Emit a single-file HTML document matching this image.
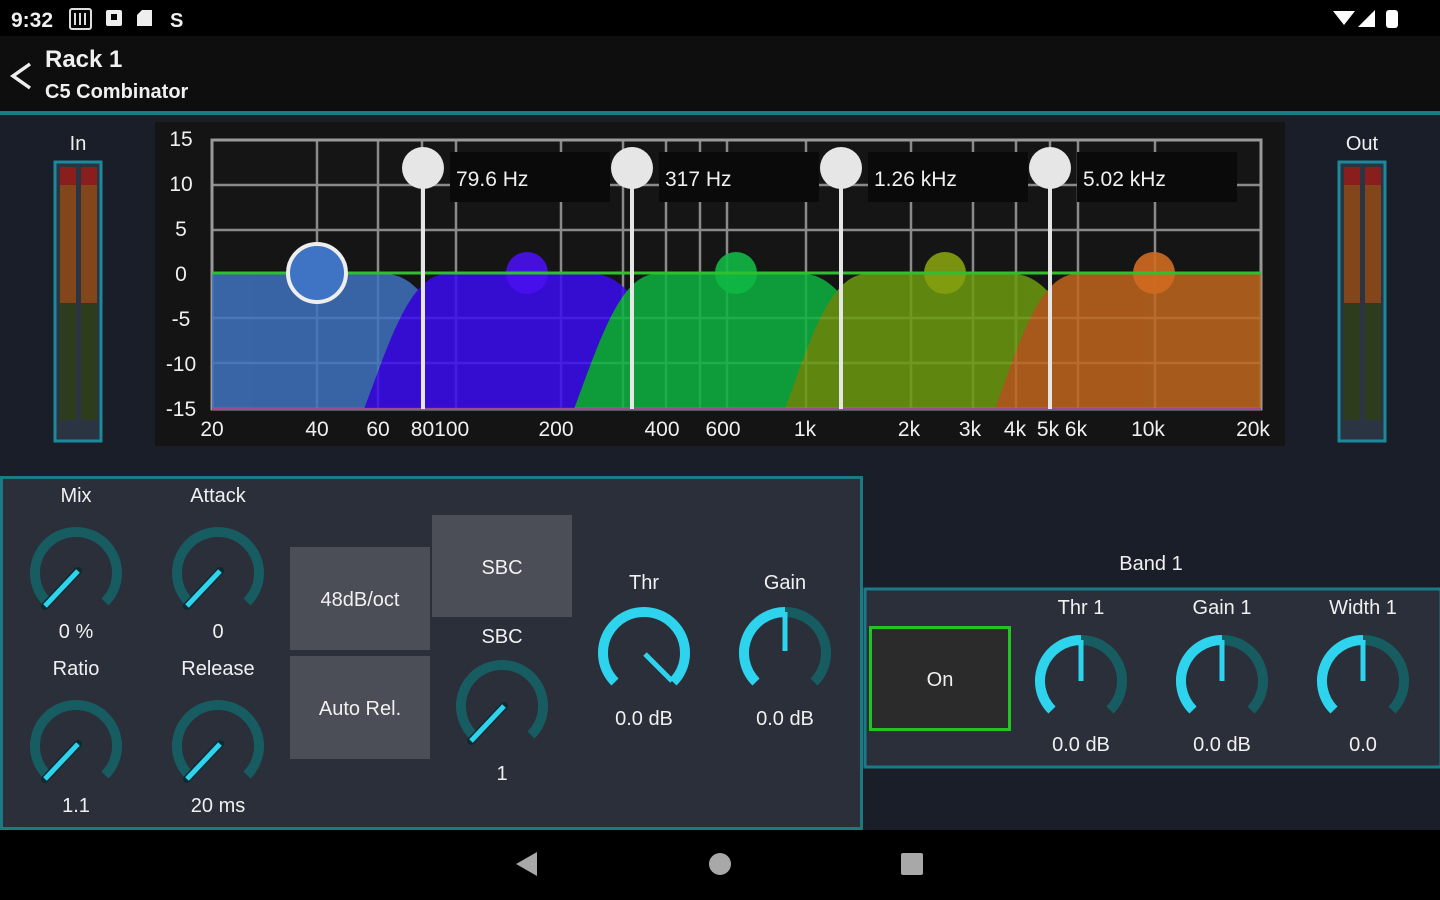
<!DOCTYPE html>
<html><head><meta charset="utf-8"><style>
html,body{margin:0;padding:0;background:#000;width:1440px;height:900px;overflow:hidden}
svg{display:block}
text{font-family:"Liberation Sans",sans-serif;fill:#f0f0f0}
</style></head><body>
<svg width="1440" height="900" viewBox="0 0 1440 900" xmlns="http://www.w3.org/2000/svg">
<defs>
<g id="meter">
<rect x="0" y="0" width="46" height="279" fill="#2a3442" stroke="#1c8a9a" stroke-width="3"/>
<rect x="5" y="5" width="16" height="18" fill="#8a1e1c"/><rect x="26" y="5" width="16" height="18" fill="#8a1e1c"/>
<rect x="5" y="23" width="16" height="118" fill="#83461a"/><rect x="26" y="23" width="16" height="118" fill="#83461a"/>
<rect x="5" y="141" width="16" height="117" fill="#2c3c1c"/><rect x="26" y="141" width="16" height="117" fill="#2c3c1c"/>
</g>
</defs>
<!-- status bar -->
<rect x="0" y="0" width="1440" height="36" fill="#000"/>
<text x="11" y="27" font-size="21" font-weight="bold">9:32</text>
<rect x="70" y="9" width="21" height="20" rx="2" fill="none" stroke="#ddd" stroke-width="2"/>
<path d="M75 13v12M80 13v12M85 13v12" stroke="#ddd" stroke-width="2"/>
<rect x="106" y="10" width="16" height="16" rx="2" fill="#eee"/><rect x="111" y="14" width="6" height="6" fill="#000"/>
<path d="M142 10h10v16h-15v-11z" fill="#eee"/>
<text x="170" y="27" font-size="20" font-weight="bold">S</text>
<path d="M1333 11h22l-11 14z" fill="#fff"/>
<path d="M1358 27l17-17v17z" fill="#fff"/>
<rect x="1386" y="10" width="12" height="18" rx="3" fill="#fff"/>
<!-- app bar -->
<rect x="0" y="36" width="1440" height="76" fill="#0e0e0e"/>
<path d="M30 64l-17 12 17 12" fill="none" stroke="#eee" stroke-width="3.5"/>
<text x="45" y="67" font-size="24" font-weight="bold">Rack 1</text>
<text x="45" y="98" font-size="20" font-weight="bold">C5 Combinator</text>
<rect x="0" y="111" width="1440" height="4" fill="#1c7a86"/>
<!-- main -->
<rect x="0" y="115" width="1440" height="715" fill="#1a1e28"/>
<text x="78" y="150" font-size="20" text-anchor="middle">In</text>
<g transform="translate(55,162)"><use href="#meter"/></g>
<text x="1362" y="150" font-size="20" text-anchor="middle">Out</text>
<g transform="translate(1339,162)"><use href="#meter"/></g>
<!-- graph -->
<rect x="155" y="122" width="1130" height="324" fill="#141414"/>
<rect x="212" y="140" width="1049" height="269" fill="#151515"/>
<g stroke="#8a8a8a" stroke-width="2.5">
<path d="M212 140h1049M212 185h1049M212 230h1049M212 318h1049M212 363h1049"/>
<path d="M317 140v269M378 140v269M422 140v269M456 140v269M561 140v269M623 140v269M666 140v269M700 140v269M727 140v269M806 140v269M911 140v269M973 140v269M1016 140v269M1050 140v269M1078 140v269M1155 140v269"/>
</g>
<rect x="212" y="140" width="1049" height="269" fill="none" stroke="#999" stroke-width="3"/>
<rect x="450" y="152" width="160" height="50" fill="#0a0a0a"/>
<rect x="659" y="152" width="160" height="50" fill="#0a0a0a"/>
<rect x="868" y="152" width="160" height="50" fill="#0a0a0a"/>
<rect x="1077" y="152" width="160" height="50" fill="#0a0a0a"/>
<g opacity="0.85">
<path d="M212 409V274H385C425 274 445 330 480 409Z" fill="#3f72c0"/>
<path d="M364 409C390 340 410 276 445 274H595C635 276 660 340 690 409Z" fill="#3a0cf2"/>
<path d="M574 409C600 340 620 276 655 274H805C845 276 870 340 900 409Z" fill="#0cb440"/>
<path d="M785 409C810 340 830 276 865 274H1015C1055 276 1080 340 1110 409Z" fill="#6c9c10"/>
<path d="M995 409C1020 340 1040 276 1075 274H1261V409Z" fill="#c0661c"/>
</g>
<circle cx="527" cy="273" r="21" fill="#4a10f0" opacity="0.9"/>
<circle cx="736" cy="273" r="21" fill="#10b844" opacity="0.9"/>
<circle cx="945" cy="273" r="21" fill="#84a010" opacity="0.9"/>
<circle cx="1154" cy="273" r="21" fill="#d06a20" opacity="0.9"/>
<path d="M212 273H1261" stroke="#2fc02f" stroke-width="3"/>
<path d="M212 409H1261" stroke="#a04a8a" stroke-width="2"/>
<circle cx="317" cy="273" r="29" fill="#3f74c4" stroke="#eee" stroke-width="4"/>
<g fill="#e6e6e6" stroke="#e6e6e6">
<path d="M423 168V409M632 168V409M841 168V409M1050 168V409" stroke-width="4"/>
<circle cx="423" cy="168" r="21" stroke="none"/><circle cx="632" cy="168" r="21" stroke="none"/>
<circle cx="841" cy="168" r="21" stroke="none"/><circle cx="1050" cy="168" r="21" stroke="none"/>
</g>
<g font-size="21">
<text x="456" y="186">79.6 Hz</text><text x="665" y="186">317 Hz</text>
<text x="874" y="186">1.26 kHz</text><text x="1083" y="186">5.02 kHz</text>
</g>
<g font-size="21" text-anchor="middle">
<text x="181" y="146">15</text><text x="181" y="191">10</text><text x="181" y="236">5</text><text x="181" y="281">0</text>
<text x="181" y="326">-5</text><text x="181" y="371">-10</text><text x="181" y="416">-15</text>
<text x="212" y="436">20</text><text x="317" y="436">40</text><text x="378" y="436">60</text><text x="440" y="436">80100</text>
<text x="556" y="436">200</text><text x="662" y="436">400</text><text x="723" y="436">600</text><text x="805" y="436">1k</text>
<text x="909" y="436">2k</text><text x="970" y="436">3k</text><text x="1015" y="436">4k</text><text x="1062" y="436">5k 6k</text>
<text x="1148" y="436">10k</text><text x="1253" y="436">20k</text>
</g>
<!-- bottom left panel -->
<rect x="1.5" y="477.5" width="860" height="351" fill="#2a2f3a" stroke="#1c7a86" stroke-width="3"/>
<!-- right band panel -->
<text x="1151" y="570" font-size="20" text-anchor="middle">Band 1</text>
<rect x="865" y="589" width="576" height="178" fill="#2a2f3a" stroke="#1c7a86" stroke-width="3"/>
<rect x="870.5" y="627.5" width="139" height="102" fill="#2b2b2b" stroke="#22c422" stroke-width="3"/>
<text x="940" y="686" font-size="20" text-anchor="middle">On</text>
<g font-size="20" text-anchor="middle">
<text x="1081" y="614">Thr 1</text><text x="1222" y="614">Gain 1</text><text x="1363" y="614">Width 1</text>
<text x="1081" y="751">0.0 dB</text><text x="1222" y="751">0.0 dB</text><text x="1363" y="751">0.0</text>
</g>
<g font-size="20" text-anchor="middle">
<text x="76" y="502">Mix</text><text x="218" y="502">Attack</text>
<text x="76" y="638">0 %</text><text x="218" y="638">0</text>
<text x="76" y="675">Ratio</text><text x="218" y="675">Release</text>
<text x="76" y="812">1.1</text><text x="218" y="812">20 ms</text>
<text x="502" y="643">SBC</text><text x="502" y="780">1</text>
<text x="644" y="589">Thr</text><text x="785" y="589">Gain</text>
<text x="644" y="725">0.0 dB</text><text x="785" y="725">0.0 dB</text>
</g>
<rect x="290" y="547" width="140" height="103" fill="#4b4d57"/>
<rect x="290" y="656" width="140" height="103" fill="#4b4d57"/>
<rect x="432" y="515" width="140" height="102" fill="#4b4d57"/>
<g font-size="20" text-anchor="middle" fill="#ddd">
<text x="360" y="606">48dB/oct</text><text x="360" y="715">Auto Rel.</text><text x="502" y="574">SBC</text>
</g>
<!-- knobs -->
<g fill="none" stroke-width="10">
<g stroke="#175c60">
<path d="M47 602A41 41 0 1 1 105 602"/><path d="M189 602A41 41 0 1 1 247 602"/>
<path d="M47 775A41 41 0 1 1 105 775"/><path d="M189 775A41 41 0 1 1 247 775"/>
<path d="M473 735A41 41 0 1 1 531 735"/>
<path d="M756 682A41 41 0 0 1 785 612A41 41 0 0 1 814 682"/>
<path d="M1052 710A41 41 0 0 1 1081 640A41 41 0 0 1 1110 710"/>
<path d="M1193 710A41 41 0 0 1 1222 640A41 41 0 0 1 1251 710"/>
<path d="M1334 710A41 41 0 0 1 1363 640A41 41 0 0 1 1392 710"/>
</g>
<g stroke="#2ed4ee">
<path d="M615 682A41 41 0 1 1 673 682"/>
<path d="M756 682A41 41 0 0 1 785 612"/>
<path d="M1052 710A41 41 0 0 1 1081 640"/>
<path d="M1193 710A41 41 0 0 1 1222 640"/>
<path d="M1334 710A41 41 0 0 1 1363 640"/>
</g>
</g>
<g stroke="#0c2a30" stroke-width="8" stroke-linecap="round">
<path d="M78 571L45 606M220 571L187 606M78 744L45 779M220 744L187 779M504 706L471 741"/>
</g>
<g stroke="#2ed4ee" stroke-width="5">
<path d="M78 571L45 606M220 571L187 606M78 744L45 779M220 744L187 779M504 706L471 741"/>
<path d="M645 654L672 681"/>
<path d="M785 612V651M1081 640V681M1222 640V681M1363 640V681"/>
</g>
<!-- nav -->
<rect x="0" y="830" width="1440" height="70" fill="#000"/>
<path d="M537 852V876L516 864Z" fill="#a8a8a8"/>
<circle cx="720" cy="864" r="11" fill="#a8a8a8"/>
<rect x="901" y="853" width="22" height="22" rx="2" fill="#a8a8a8"/>
</svg>
</body></html>
